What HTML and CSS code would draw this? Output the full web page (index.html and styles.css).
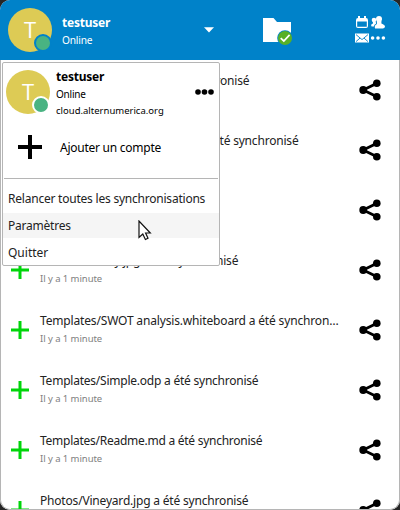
FILE: index.html
```
<!DOCTYPE html>
<html lang="fr">
<head>
<meta charset="utf-8">
<title>testuser</title>
<link rel="stylesheet" href="styles.css">
</head>
<body>
<svg width="0" height="0" class="defs">
  <symbol id="share" viewBox="0 0 22 22"><path d="M18 4.2 4.2 11 18 17.8" fill="none" stroke="#000" stroke-width="2.8"/><circle cx="4.2" cy="11" r="3.9"/><circle cx="17.8" cy="4.3" r="3.8"/><circle cx="17.8" cy="17.7" r="3.8"/></symbol>
  <symbol id="plus" viewBox="0 0 18 18"><path d="M9 0V18M0 9H18" fill="none" stroke="currentColor" stroke-width="3"/></symbol>
</svg>
<div class="window">
  <header class="header">
    <div class="avatar">T<span class="status"></span></div>
    <div class="who"><div class="name"><span>testuser</span></div><div class="state">Online</div></div>
    <svg class="caret" width="10" height="6" viewBox="0 0 10 6"><path d="M0 .3H10L5 5.5Z" fill="#fff"/></svg>
    <svg class="folder" width="30" height="30" viewBox="0 0 30 30"><path d="M0 1H10.5L14 5H28V25H0Z" fill="#fff"/><circle cx="22" cy="21" r="7.8" fill="#0082c9"/><circle cx="22" cy="21" r="7" fill="#58b027"/><path d="M17.7 21.2 20.8 24 26.6 17.8" fill="none" stroke="#fff" stroke-width="1.7"/></svg>
    <svg class="apps" width="31" height="28" viewBox="0 0 31 28" fill="#fff">
      <path d="M1 4.2Q1 2 3 2H11Q13 2 13 4.2V10Q13 12 11 12H3Q1 12 1 10ZM2.2 5.6V10.8H11.8V5.6Z" fill-rule="evenodd"/><path d="M3 0H5V4H3ZM9 0H11V4H9Z"/>
      <circle cx="24" cy="3" r="3"/><path d="M21.8 5H26.4V7.4Q30 8.6 30 10.6Q30 12.4 28 12.4H20Q19 9.5 22 8Z"/>
      <circle cx="19" cy="4" r="2.3"/><path d="M17.8 5.5H20.6L21.2 7.6Q19.2 8.6 18.8 10.4H16.6Q15.2 8.4 18 7.4Z"/>
      <path d="M0 17.6H14V26.6H0Z"/><path d="M1 18.6 7 23.6 13 18.6M1 25.6 5 22.1M13 25.6 9 22.1" fill="none" stroke="#0082c9" stroke-width=".9"/>
      <circle cx="17.6" cy="22" r="1.8"/><circle cx="23" cy="22" r="1.8"/><circle cx="28.4" cy="22" r="1.8"/>
    </svg>
  </header>
  <main class="list">
    <div class="row"><svg class="add"><use href="#plus"/></svg><div class="text"><div class="title t1"><span>Photos/Nineyard.jpg a été synchronisé</span></div><div class="time">Il y a 1 minute</div></div><svg class="share"><use href="#share"/></svg></div>
    <div class="row"><svg class="add"><use href="#plus"/></svg><div class="text"><div class="title t2"><span>Templates/Meeting notes.md a été synchronisé</span></div><div class="time">Il y a 1 minute</div></div><svg class="share"><use href="#share"/></svg></div>
    <div class="row"><svg class="add"><use href="#plus"/></svg><div class="text"><div class="title"><span>Photos/Birdie.jpg</span></div><div class="time">Il y a 1 minute</div></div><svg class="share"><use href="#share"/></svg></div>
    <div class="row"><svg class="add"><use href="#plus"/></svg><div class="text"><div class="title t4"><span>Photos/Library.jpg a été synchronisé</span></div><div class="time">Il y a 1 minute</div></div><svg class="share"><use href="#share"/></svg></div>
    <div class="row"><svg class="add"><use href="#plus"/></svg><div class="text"><div class="title t5"><span>Templates/SWOT analysis.whiteboard a été synchron…</span></div><div class="time">Il y a 1 minute</div></div><svg class="share"><use href="#share"/></svg></div>
    <div class="row"><svg class="add"><use href="#plus"/></svg><div class="text"><div class="title t6"><span>Templates/Simple.odp a été synchronisé</span></div><div class="time">Il y a 1 minute</div></div><svg class="share"><use href="#share"/></svg></div>
    <div class="row"><svg class="add"><use href="#plus"/></svg><div class="text"><div class="title"><span>Templates/Readme.md a été synchronisé</span></div><div class="time">Il y a 1 minute</div></div><svg class="share"><use href="#share"/></svg></div>
    <div class="row"><svg class="add"><use href="#plus"/></svg><div class="text"><div class="title t8"><span>Photos/Vineyard.jpg a été synchronisé</span></div></div><svg class="share"><use href="#share"/></svg></div>
  </main>
  <div class="frame"></div>
</div>
<nav class="menu">
  <div class="account">
    <div class="avatar light">T<span class="status"></span></div>
    <div class="details"><div class="name"><span>testuser</span></div><div class="state">Online</div><div class="server">cloud.alternumerica.org</div></div>
    <svg class="more" width="19" height="6" viewBox="0 0 19 6"><circle cx="3" cy="3" r="2.8"/><circle cx="9.5" cy="3" r="2.8"/><circle cx="16" cy="3" r="2.8"/></svg>
  </div>
  <div class="new"><svg width="24" height="24" viewBox="0 0 24 24"><path d="M12 0V24M0 12H24" stroke="#000" stroke-width="4"/></svg><span>Ajouter un compte</span></div>
  <div class="item sync"><span>Relancer toutes les synchronisations</span></div>
  <div class="item active"><span>Paramètres</span></div>
  <div class="item quit"><span>Quitter</span></div>
</nav>
<svg class="cursor" width="14" height="21" viewBox="0 0 14 21"><path d="M1 1V17.5L4.8 14 7.4 19.5 10 18.2 7.6 13H12.3Z" fill="#fff" stroke="#111" stroke-width="1.2"/></svg>
</body>
</html>
```
FILE: styles.css
```
* { box-sizing: border-box; }
body { margin: 0; width: 400px; height: 510px; overflow: hidden; background: #262626; font-family: "Noto Sans", sans-serif; color: #222; }
.defs { display: block; position: absolute; }
span { white-space: nowrap; }
.window { position: relative; height: 510px; overflow: hidden; border-radius: 10px; background: #fff; }
.frame { position: absolute; inset: 60px 0 0; border: 1px solid #b5b5b5; border-top: 0; border-radius: 0 0 10px 10px; }
.header { display: flex; height: 60px; padding-left: 8px; background: #0082c9; color: #fff; }
.avatar { position: relative; flex: none; width: 44px; height: 44px; margin-top: 8px; border-radius: 50%; background: #ddcb55; color: #fff; text-align: center; font: 22px/42px "Open Sans", sans-serif; }
.status { position: absolute; left: 26px; top: 26px; width: 18px; height: 18px; border-radius: 50%; background: #49b382; border: 2px solid #0082c9; }
.light .status { border-color: #fff; }
.who { width: 150px; padding: 14px 0 0 10px; }
.name { font-size: 12px; line-height: 18px; font-weight: 700; letter-spacing: -.22px; }
.state { font-size: 10px; line-height: 17px; letter-spacing: -.22px; }
.who .state { font-size: 10.2px; line-height: 17px; }
.caret { margin: 27px 0 0 2px; }
.folder { margin: 17px 0 0 49px; }
.apps { margin: 16px 0 0 62px; }
.row { display: flex; height: 60px; }
.add { width: 18px; height: 18px; margin: 21px 11px 0; color: #00d50a; }
.text { width: 305px; padding-top: 12px; }
.title { font-size: 12px; line-height: 18px; letter-spacing: -.26px; }
.t1 { letter-spacing: -.22px; }
.t2, .t4, .t8 { letter-spacing: -.19px; }
.t5 { letter-spacing: -.16px; }
.t6 { letter-spacing: -.23px; }
.time { font-size: 9.5px; line-height: 17px; letter-spacing: -.06px; color: #808080; }
.share { width: 22px; height: 22px; margin: 19px 0 0 14px; }
.menu { position: absolute; left: 2px; top: 62px; width: 218px; height: 204px; border: 1px solid #b5b5b5; border-radius: 2px; background: #fff; color: #000; }
.account { display: flex; height: 60px; padding-left: 3px; }
.account .avatar { margin-top: 7px; }
.details { width: 145px; padding: 5px 0 0 6px; }
.server { font-size: 9.5px; line-height: 16px; }
.more { margin-top: 26px; }
.new { display: flex; align-items: center; gap: 18px; height: 56px; padding: 0 0 8px 14px; margin: 0 1px; border-bottom: 1px solid #b5b5b5; font-size: 12px; letter-spacing: -.25px; }
.new span { position: relative; top: 1px; }
.item { height: 27px; padding: 1px 5px 0; font-size: 12px; line-height: 24px; letter-spacing: -.22px; color: #222; }
.sync { height: 34px; padding-top: 8px; }
.active { height: 25px; margin-bottom: 2px; background: #f5f5f5; }
.quit { letter-spacing: 0; }
.cursor { position: absolute; left: 138px; top: 220px; }
```
